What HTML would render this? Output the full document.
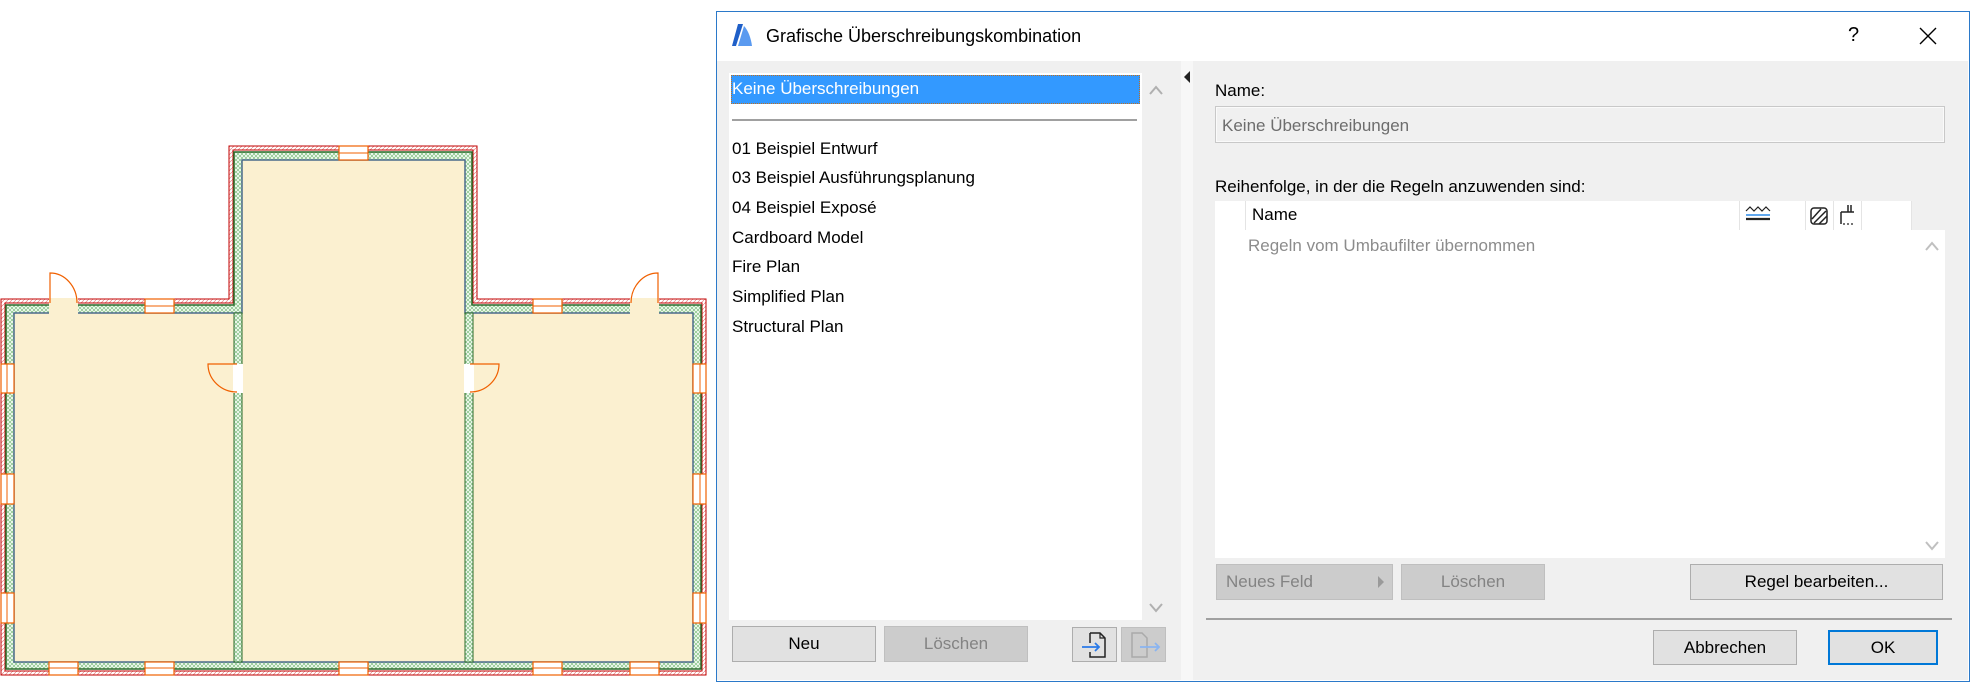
<!DOCTYPE html>
<html><head><meta charset="utf-8"><style>
*{margin:0;padding:0;box-sizing:border-box}
body{width:1970px;height:682px;background:#fff;position:relative;overflow:hidden;font-family:"Liberation Sans",Arial,sans-serif;font-size:17px;color:#000}
.a{position:absolute}
.btn{position:absolute;background:#e1e1e1;border:1px solid #adadad;text-align:center;font-size:17px}
.dis{background:#cccccc;border-color:#bfbfbf;color:#838383}
.it{position:absolute;left:732px;font-size:17px;line-height:20px}
</style></head><body>

<svg class="a" style="left:0;top:0" width="716" height="682" viewBox="0 0 716 682">
<defs>
<pattern id="rh" width="4" height="4" patternUnits="userSpaceOnUse"><rect width="4" height="4" fill="#fff"/><path d="M0 4L4 0" stroke="#e88080" stroke-width="0.7"/></pattern>
<pattern id="gh" width="4" height="4" patternUnits="userSpaceOnUse"><rect width="4" height="4" fill="#f2faf2"/><path d="M0 4L4 0M0 0L4 4" stroke="#70b870" stroke-width="0.6"/></pattern>
</defs>
<polygon points="1,299 229,299 229,146 477,146 477,299 706,299 706,675 1,675" fill="url(#rh)" stroke="#c00000" stroke-width="1"/>
<polygon points="5,303 233,303 233,150 473,150 473,303 702,303 702,671 5,671" fill="#fff" stroke="#c00000" stroke-width="1"/>
<polygon points="6,305 234,305 234,152 472,152 472,305 701,305 701,669 6,669" fill="url(#gh)" stroke="#2a6a2a" stroke-width="1.5"/>
<polygon points="14,313 242,313 242,160 465,160 465,313 693,313 693,662 14,662" fill="#fbf0d0" stroke="#4a6a8a" stroke-width="1.5"/>
<rect x="234" y="313" width="8" height="349" fill="url(#gh)" stroke="#2a6a2a" stroke-width="1"/>
<rect x="465" y="313" width="8" height="349" fill="url(#gh)" stroke="#2a6a2a" stroke-width="1"/>
<g fill="#fff" stroke="#f06000" stroke-width="1.2">
<rect x="145" y="299" width="29" height="14"/><rect x="339" y="146" width="29" height="14"/><rect x="533" y="299" width="29" height="14"/>
<rect x="49" y="662" width="29" height="13"/><rect x="145" y="662" width="29" height="13"/><rect x="339" y="662" width="29" height="13"/><rect x="533" y="662" width="29" height="13"/><rect x="630" y="662" width="29" height="13"/>
<rect x="1" y="364" width="13" height="29"/><rect x="1" y="474" width="13" height="30"/><rect x="1" y="593" width="13" height="30"/>
<rect x="693" y="364" width="13" height="29"/><rect x="693" y="474" width="13" height="30"/><rect x="693" y="593" width="13" height="30"/>
</g>
<g stroke="#f06000" stroke-width="1" fill="none">
<line x1="145" y1="306" x2="174" y2="306"/><line x1="339" y1="153" x2="368" y2="153"/><line x1="533" y1="306" x2="562" y2="306"/>
<line x1="49" y1="668" x2="78" y2="668"/><line x1="145" y1="668" x2="174" y2="668"/><line x1="339" y1="668" x2="368" y2="668"/><line x1="533" y1="668" x2="562" y2="668"/><line x1="630" y1="668" x2="659" y2="668"/>
<line x1="7" y1="364" x2="7" y2="393"/><line x1="7" y1="474" x2="7" y2="504"/><line x1="7" y1="593" x2="7" y2="623"/>
<line x1="700" y1="364" x2="700" y2="393"/><line x1="700" y1="474" x2="700" y2="504"/><line x1="700" y1="593" x2="700" y2="623"/>
</g>
<rect x="49" y="298" width="29" height="16" fill="#fbf0d0"/>
<rect x="630" y="298" width="29" height="16" fill="#fbf0d0"/>
<rect x="233" y="364" width="10" height="29" fill="#fff"/>
<rect x="464" y="364" width="10" height="29" fill="#fff"/>
<g stroke="#f06000" stroke-width="1.2" fill="none">
<path d="M50 303V273A27 30 0 0 1 77 303"/>
<path d="M658 303V273A27 30 0 0 0 631 303"/>
<path d="M237 364H208A29 28 0 0 0 237 392"/>
<path d="M470 364H499A29 28 0 0 1 470 392"/>
</g>
</svg>

<div class="a" style="left:716px;top:11px;width:1254px;height:671px;border:1px solid #2b79c9;background:#fff"></div>
<div class="a" style="left:717px;top:61px;width:1251px;height:619px;background:#f0f0f0"></div>
<svg class="a" style="left:730px;top:22px" width="24" height="25" viewBox="0 0 24 25"><path d="M2 24L8 2H13L6 24Z" fill="#1f5fc8"/><path d="M8 24L14 4C18 8 21 16 22 24Z" fill="#5a9af0"/></svg>
<div class="a" style="left:766px;top:26px;font-size:18px;color:#000">Grafische Überschreibungskombination</div>
<div class="a" style="left:1848px;top:24px;font-size:20px">?</div>
<svg class="a" style="left:1919px;top:27px" width="18" height="18"><path d="M1 1L17 17M17 1L1 17" stroke="#000" stroke-width="1.4"/></svg>

<div class="a" style="left:729px;top:73px;width:413px;height:547px;background:#fff"></div>
<div class="a" style="left:1142px;top:73px;width:39px;height:547px;background:#f0f0f0"></div>
<div class="a" style="left:1181px;top:61px;width:12px;height:619px;background:#f7f7f7"></div>
<div class="a" style="left:731px;top:75px;width:409px;height:29px;background:#3399ff;border:1px dotted #c07020"></div>
<div class="it" style="top:79px;color:#fff">Keine Überschreibungen</div>
<div class="a" style="left:732px;top:119px;width:405px;height:2px;background:#a0a0a0"></div>
<div class="it" style="top:139px">01 Beispiel Entwurf</div>
<div class="it" style="top:168px">03 Beispiel Ausführungsplanung</div>
<div class="it" style="top:198px">04 Beispiel Exposé</div>
<div class="it" style="top:228px">Cardboard Model</div>
<div class="it" style="top:257px">Fire Plan</div>
<div class="it" style="top:287px">Simplified Plan</div>
<div class="it" style="top:317px">Structural Plan</div>
<svg class="a" style="left:1148px;top:84px" width="16" height="12"><path d="M2 10L8 3L14 10" stroke="#b0b0b0" stroke-width="2" fill="none"/></svg>
<svg class="a" style="left:1148px;top:602px" width="16" height="12"><path d="M2 2L8 9L14 2" stroke="#b0b0b0" stroke-width="2" fill="none"/></svg>
<svg class="a" style="left:1183px;top:70px" width="8" height="14"><path d="M7 1L1 7L7 13Z" fill="#222"/></svg>

<div class="btn" style="left:732px;top:626px;width:144px;height:36px;line-height:34px">Neu</div>
<div class="btn dis" style="left:884px;top:626px;width:144px;height:36px;line-height:34px">Löschen</div>
<div class="btn" style="left:1072px;top:627px;width:45px;height:35px;background:#e1e1e1"></div>
<svg class="a" style="left:1080px;top:630px" width="30" height="30"><path d="M10 3H20L25 8V27H10V22M10 13V3" stroke="#222" stroke-width="1.5" fill="none"/><path d="M20 3V8H25" stroke="#222" stroke-width="1.2" fill="none"/><path d="M2 17H19M15 13L19 17L15 21" stroke="#2a7ae8" stroke-width="1.8" fill="none"/></svg>
<div class="btn dis" style="left:1121px;top:627px;width:45px;height:35px"></div>
<svg class="a" style="left:1128px;top:630px" width="34" height="30"><path d="M4 3H14L19 8V27H4Z" stroke="#aaa" stroke-width="1.5" fill="none"/><path d="M12 17H31M27 13L31 17L27 21" stroke="#8ab4f0" stroke-width="1.8" fill="none"/></svg>

<div class="a" style="left:1215px;top:81px;font-size:17px">Name:</div>
<div class="a" style="left:1215px;top:106px;width:730px;height:37px;border:1px solid #c8c8c8;background:#f0f0f0;box-shadow:inset 0 0 0 1px #fafafa"></div>
<div class="a" style="left:1222px;top:116px;font-size:17px;color:#6d6d6d">Keine Überschreibungen</div>
<div class="a" style="left:1215px;top:177px;font-size:17px">Reihenfolge, in der die Regeln anzuwenden sind:</div>
<div class="a" style="left:1215px;top:201px;width:697px;height:30px;background:#fff"></div>
<div class="a" style="left:1215px;top:230px;width:730px;height:328px;background:#fff"></div>
<div class="a" style="left:1245px;top:201px;width:1px;height:29px;background:#e4e4e4"></div>
<div class="a" style="left:1739px;top:201px;width:1px;height:29px;background:#e4e4e4"></div>
<div class="a" style="left:1805px;top:201px;width:1px;height:29px;background:#e4e4e4"></div>
<div class="a" style="left:1833px;top:201px;width:1px;height:29px;background:#e4e4e4"></div>
<div class="a" style="left:1861px;top:201px;width:1px;height:29px;background:#e4e4e4"></div>
<div class="a" style="left:1911px;top:201px;width:1px;height:29px;background:#e4e4e4"></div>
<div class="a" style="left:1252px;top:205px;font-size:17px">Name</div>
<svg class="a" style="left:1744px;top:206px" width="30" height="18"><path d="M2 5L6 1L10 5L14 1L18 5L22 1L26 5" stroke="#222" stroke-width="1.2" fill="none"/><path d="M2 9H26" stroke="#2a8ae8" stroke-width="1.5"/><path d="M2 13H26" stroke="#222" stroke-width="2.2"/></svg>
<svg class="a" style="left:1809px;top:205px" width="22" height="22"><rect x="2" y="3" width="16" height="16" rx="3" stroke="#222" stroke-width="1.5" fill="none"/><path d="M3 14L12 4M5 18L17 6M10 19L18 11" stroke="#222" stroke-width="1.5"/></svg>
<svg class="a" style="left:1837px;top:203px" width="22" height="24"><path d="M11 2V9M14 2V9M4 9H17M4 9V21" stroke="#222" stroke-width="1.5" fill="none"/><path d="M6 21H8M10 21H12M14 21H16" stroke="#222" stroke-width="1.2"/></svg>
<div class="a" style="left:1248px;top:236px;font-size:17px;color:#8c8c8c">Regeln vom Umbaufilter übernommen</div>
<svg class="a" style="left:1924px;top:240px" width="16" height="12"><path d="M2 10L8 3L14 10" stroke="#c0c0c0" stroke-width="2" fill="none"/></svg>
<svg class="a" style="left:1924px;top:540px" width="16" height="12"><path d="M2 2L8 9L14 2" stroke="#c0c0c0" stroke-width="2" fill="none"/></svg>

<div class="btn dis" style="left:1216px;top:564px;width:177px;height:36px;line-height:34px;text-align:left;padding-left:9px">Neues Feld</div>
<svg class="a" style="left:1377px;top:575px" width="8" height="14"><path d="M1 1L7 7L1 13Z" fill="#9a9a9a"/></svg>
<div class="btn dis" style="left:1401px;top:564px;width:144px;height:36px;line-height:34px">Löschen</div>
<div class="btn" style="left:1690px;top:564px;width:253px;height:36px;line-height:34px">Regel bearbeiten...</div>
<div class="a" style="left:1206px;top:618px;width:746px;height:2px;background:#a0a0a0"></div>
<div class="btn" style="left:1653px;top:630px;width:144px;height:35px;line-height:33px">Abbrechen</div>
<div class="btn" style="left:1828px;top:630px;width:110px;height:35px;line-height:31px;border:2px solid #0078d7">OK</div>
</body></html>
